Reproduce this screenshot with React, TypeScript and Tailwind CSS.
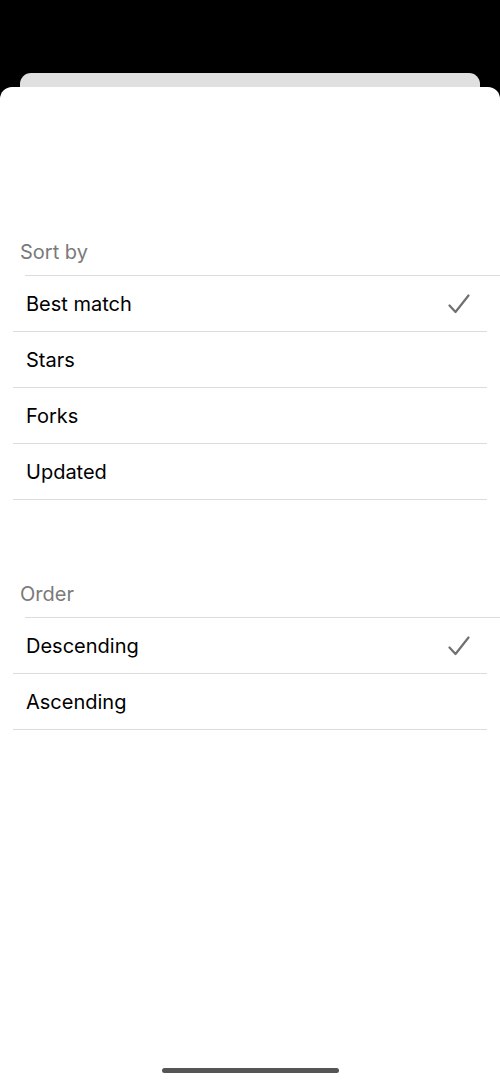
import React from 'react';

type Section = {
    title: string;
    options: string[];
    selected: string;
};

const sections: Section[] = [
    { title: 'Sort by', options: ['Best match', 'Stars', 'Forks', 'Updated'], selected: 'Best match' },
    { title: 'Order', options: ['Descending', 'Ascending'], selected: 'Descending' },
];

const Check = () => (
    <svg width="22" height="20" viewBox="0 0 22 20" fill="none">
        <path d="M1.5 11.5 L7.5 18 L20.5 1.5" stroke="#707070" strokeWidth="2.2" strokeLinecap="round" strokeLinejoin="round" />
    </svg>
);

const App: React.FC = () => {
    return (
        <div className="w-[500px] h-[1084px] bg-black flex flex-col overflow-hidden" style={{ fontFamily: 'Inter, "Noto Sans", sans-serif' }}>
            {/* stacked card behind */}
            <div className="h-[73px] shrink-0" />
            <div className="mx-[20px] h-[14px] shrink-0 bg-[#e0e0e0] rounded-t-[11px]" />

            {/* sheet */}
            <div className="flex-1 bg-white rounded-t-[12px] flex flex-col">
                <div className="pt-[150px]">
                    {sections.map((section, si) => (
                        <div key={section.title} className={si > 0 ? 'mt-[79px]' : ''}>
                            <div className="pl-[20px] h-[38px] text-[20px] text-[#7a7a7a] leading-none flex items-start pt-[5px]">
                                {section.title}
                            </div>
                            <div className="ml-[25px] h-px bg-[#dcdcdc]" />
                            {section.options.map((opt) => (
                                <div key={opt}>
                                    <div className="h-[55px] pl-[26px] pr-[30px] flex items-center justify-between text-[20px] text-black">
                                        <span>{opt}</span>
                                        {opt === section.selected && <Check />}
                                    </div>
                                    <div className="mx-[13px] h-px bg-[#dcdcdc]" />
                                </div>
                            ))}
                        </div>
                    ))}
                </div>

                <div className="mt-auto pb-[11px] flex justify-center">
                    <div className="w-[177px] h-[5px] rounded-full bg-[#555555]" />
                </div>
            </div>
        </div>
    );
};

export default App;
